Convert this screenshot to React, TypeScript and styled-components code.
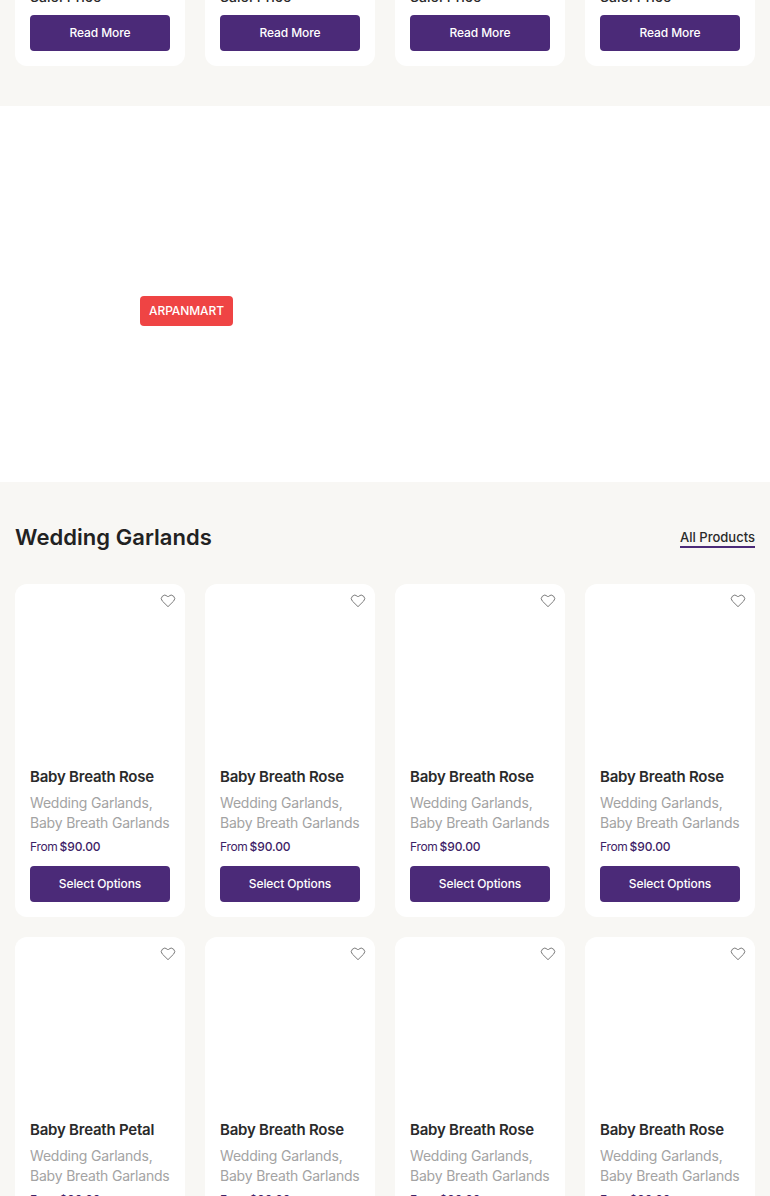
import React from "react";
import styled, { createGlobalStyle } from "styled-components";

const Global = createGlobalStyle`
  html, body { margin: 0; padding: 0; background: #fff; }
  body { font-family: "Inter", "Liberation Sans", sans-serif; overflow: hidden; }
  * { box-sizing: border-box; }
`;

const Page = styled.div`
  height: 1196px;
  overflow: hidden;
`;

const Section = styled.section`
  background: #f8f7f4;
  padding: 0 15px 40px;
`;

const TopSection = styled(Section)`
  margin-top: -14px;
`;

const Grid = styled.div`
  display: grid;
  grid-template-columns: repeat(4, 170px);
  column-gap: 20px;
  row-gap: 20px;
`;

const Card = styled.article`
  background: #fff;
  border-radius: 12px;
  padding: 0 15px 15px;
  position: relative;
`;

const CutCard = styled(Card)`
  height: 80px;
  border-radius: 0 0 12px 12px;
`;

const CutPrice = styled.div`
  font-size: 14px;
  line-height: 18px;
  font-weight: 500;
  color: #2a2a2a;
  height: 29px;
  padding-top: 2px;
  white-space: nowrap;
`;

const Button = styled.button`
  display: block;
  width: 100%;
  height: 36px;
  border: 0;
  border-radius: 4px;
  background: #4b2a78;
  color: #fff;
  font: 500 12px/36px "Inter", sans-serif;
  letter-spacing: -0.1px;
  text-align: center;
  padding: 0;
`;

const Hero = styled.div`
  height: 376px;
  background: #fff;
  display: flex;
  align-items: center;
  padding: 33px 0 0 140px;
`;

const Badge = styled.span`
  height: 30px;
  width: 93px;
  background: #ef4444;
  color: #fff;
  border-radius: 4px;
  font-size: 12px;
  font-weight: 500;
  line-height: 30px;
  text-align: center;
  letter-spacing: -0.1px;
`;

const Head = styled.header`
  display: flex;
  justify-content: space-between;
  align-items: center;
  height: 102px;
  padding: 20px 0 10px;
`;

const Title = styled.h2`
  margin: 0 0 2px;
  font-size: 22px;
  line-height: 34px;
  font-weight: 600;
  color: #222;
  letter-spacing: 0.05px;
`;

const AllLink = styled.a`
  font-size: 13px;
  line-height: 18px;
  font-weight: 500;
  color: #2a2a2a;
  border-bottom: 2px solid #4b2a78;
`;

const Media = styled.div`
  height: 182px;
`;

const Wish = styled.span`
  position: absolute;
  top: 9px;
  right: 9px;
  width: 16px;
  height: 16px;
  color: #666;
  display: flex;
`;

const Name = styled.h3`
  margin: 0 0 5px;
  font-size: 15px;
  line-height: 22px;
  font-weight: 600;
  color: #2a2a2a;
  letter-spacing: -0.22px;
  white-space: nowrap;
`;

const Cats = styled.p`
  margin: 0 0 5px;
  font-size: 14px;
  line-height: 20px;
  font-weight: 400;
  color: #a3a3a3;
  letter-spacing: -0.2px;
  white-space: nowrap;
`;

const Price = styled.div`
  font-size: 12px;
  line-height: 18px;
  font-weight: 500;
  color: #3d2266;
  letter-spacing: -0.1px;
  margin-bottom: 10px;
`;

const From = styled.span`
  font-weight: 400;
  letter-spacing: -0.3px;
  margin-right: 2px;
`;

const Heart = () => (
  <svg width="16" height="16" viewBox="0 0 24 24" fill="none" stroke="currentColor" strokeWidth="1.3" strokeLinejoin="round">
    <path d="M12 20.5 3.6 12.2a5.2 5.2 0 0 1 0-7.4 5.2 5.2 0 0 1 7.3 0L12 5.9l1.1-1.1a5.2 5.2 0 0 1 7.3 0 5.2 5.2 0 0 1 0 7.4Z" />
  </svg>
);

const Product = ({ name }: { name: string }) => (
  <Card>
    <Wish><Heart /></Wish>
    <Media />
    <Name>{name}</Name>
    <Cats>Wedding Garlands,<br />Baby Breath Garlands</Cats>
    <Price><From>From</From>$90.00</Price>
    <Button>Select Options</Button>
  </Card>
);

const names = [
  "Baby Breath Rose", "Baby Breath Rose", "Baby Breath Rose", "Baby Breath Rose",
  "Baby Breath Petal", "Baby Breath Rose", "Baby Breath Rose", "Baby Breath Rose",
];

export default function App() {
  return (
    <Page>
      <Global />
      <TopSection>
        <Grid>
          {[0, 1, 2, 3].map((i) => (
            <CutCard key={i}>
              <CutPrice>Sale: Price</CutPrice>
              <Button>Read More</Button>
            </CutCard>
          ))}
        </Grid>
      </TopSection>
      <Hero><Badge>ARPANMART</Badge></Hero>
      <Section>
        <Head>
          <Title>Wedding Garlands</Title>
          <AllLink>All Products</AllLink>
        </Head>
        <Grid>
          {names.map((n, i) => <Product key={i} name={n} />)}
        </Grid>
      </Section>
    </Page>
  );
}
